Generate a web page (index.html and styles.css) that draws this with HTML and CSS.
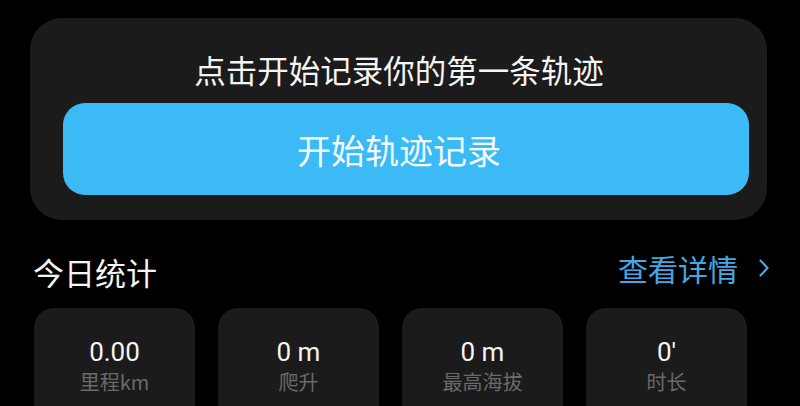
FILE: index.html
```html
<!DOCTYPE html>
<html lang="zh-CN">
<head>
<meta charset="utf-8">
<title>轨迹记录</title>
<link rel="stylesheet" href="styles.css">
</head>
<body>
<main class="page">
  <section class="record-card">
    <p class="record-hint">点击开始记录你的第一条轨迹</p>
    <button class="record-btn" type="button">开始轨迹记录</button>
  </section>
  <section class="stats">
    <header class="stats-head">
      <h2 class="stats-title">今日统计</h2>
      <a class="detail-link" href="#">查看详情<svg class="chevron" viewBox="0 0 12 20" width="12" height="20" aria-hidden="true"><path d="M2.5 2.5 L9.5 10 L2.5 17.5" fill="none" stroke="currentColor" stroke-width="2.2" stroke-linecap="round" stroke-linejoin="round"/></svg></a>
    </header>
    <div class="stat-grid">
      <div class="stat-card"><div class="stat-value">0.00</div><div class="stat-label">里程km</div></div>
      <div class="stat-card"><div class="stat-value">0 m</div><div class="stat-label">爬升</div></div>
      <div class="stat-card"><div class="stat-value">0 m</div><div class="stat-label">最高海拔</div></div>
      <div class="stat-card"><div class="stat-value">0'</div><div class="stat-label">时长</div></div>
    </div>
  </section>
</main>
</body>
</html>
```
FILE: styles.css
```css
* { box-sizing: border-box; }
html, body {
  margin: 0;
  padding: 0;
  background: #000;
  width: 800px;
  height: 406px;
  overflow: hidden;
}
body {
  font-family: "Noto Sans CJK SC", "Noto Sans", sans-serif;
  color: #f2f2f2;
}
.page {
  padding: 18px 0 0 30px;
}
.record-card {
  width: 737px;
  height: 202px;
  background: #1b1b1b;
  border-radius: 32px;
  padding: 30px 18px 0 33px;
  display: flex;
  flex-direction: column;
}
.record-hint {
  margin: 0;
  padding-right: 14px;
  text-align: center;
  font-size: 31.5px;
  line-height: 42px;
  color: #f4f4f4;
}
.record-btn {
  margin-top: 13px;
  height: 92px;
  width: 100%;
  border: 0;
  border-radius: 22px;
  background: #3bbaf6;
  color: #f4fbff;
  font-family: "Noto Sans CJK SC", sans-serif;
  font-size: 34px;
  padding: 0 14px 0 0;
}
.stats {
  margin-top: 32px;
}
.stats-head {
  display: flex;
  align-items: center;
  justify-content: space-between;
  width: 740px;
  height: 40px;
  padding-left: 3px;
}
.stats-title {
  margin: 0;
  font-size: 31px;
  font-weight: 400;
  line-height: 40px;
  color: #f4f4f4;
}
.detail-link {
  display: flex;
  align-items: center;
  gap: 20px;
  margin-top: -8px;
  color: #46a7e2;
  text-decoration: none;
  font-size: 30px;
  line-height: 40px;
}
.chevron { display: block; }
.stat-grid {
  display: flex;
  gap: 23px;
  margin-top: 16px;
  padding-left: 4px;
}
.stat-card {
  width: 161px;
  height: 98px;
  background: #1b1b1b;
  border-radius: 20px 20px 0 0;
  padding-top: 28px;
  text-align: center;
}
.stat-value {
  font-family: "Roboto", "Noto Sans CJK SC", sans-serif;
  font-size: 26px;
  line-height: 32px;
  color: #f4f4f4;
}
.stat-label {
  margin-top: 1px;
  font-size: 20px;
  line-height: 26px;
  color: #6a6a6a;
}
```
